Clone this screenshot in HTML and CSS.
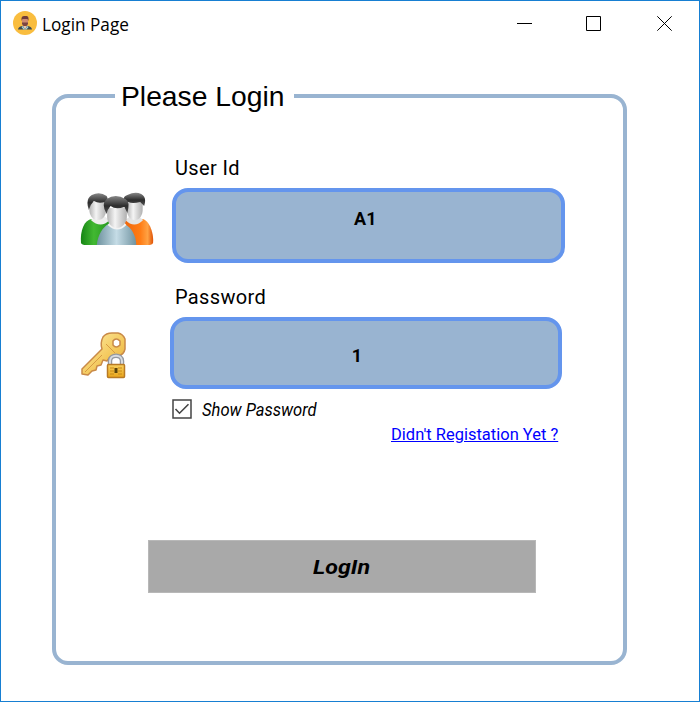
FILE: index.html
```
<!DOCTYPE html>
<html lang="en">
<head>
<meta charset="utf-8">
<title>Login Page</title>
<link rel="stylesheet" href="styles.css">
</head>
<body>
<main class="window">
  <header class="titlebar">
    <svg class="app-icon" width="24" height="24" viewBox="0 0 24 24">
      <circle cx="12" cy="12" r="12" fill="#f9bd3f"/>
      <path d="M5 18.500c.3-2.600 2-3 5-3.700h4c3 .7 4.700 1.100 5 3.700z" fill="#3d4a50"/>
      <path d="M10 13h4v2l-2 3.500-2-3.500z" fill="#e9c8ae"/>
      <path d="M9.500 15l2.500 3.500 2.500-3.500 1 1-2 2.500h-3l-2-2.500z" fill="#a8d5d8"/>
      <path d="M9 8h6v4c0 2-1.500 3-3 3s-3-1-3-3z" fill="#cf8b70"/>
      <path d="M8.500 10V7q.4-2 2.500-2h3q1.700.5 1.500 2.500V10l-1-2h-5z" fill="#703b3b"/>
      <path d="M9 11.500h6v1.500l-1.500 2h-3L9 13z" fill="#7b4540"/>
    </svg>
    <span class="title">Login Page</span>
    <div class="controls">
      <svg width="15" height="15" viewBox="0 0 15 15"><path d="M0 7.500h15" stroke="#000"/></svg>
      <svg width="15" height="15" viewBox="0 0 15 15"><path d="M.5.5h14v14H.5z" fill="none" stroke="#000"/></svg>
      <svg width="15" height="15" viewBox="0 0 15 15"><path d="M.3.300l14.400 14.400M14.700.3L.3 14.700" stroke="#000"/></svg>
    </div>
  </header>
  <section class="group">
    <h1 class="legend"><span>Please Login</span></h1>
    <div class="row user-row">
      <svg class="users" width="75" height="56" viewBox="0 0 76 56" preserveAspectRatio="none">
        <defs>
          <linearGradient id="green"><stop stop-color="#168514"/><stop offset=".35" stop-color="#42b832"/><stop offset="1" stop-color="#168817"/></linearGradient>
          <linearGradient id="orange"><stop stop-color="#e85a04"/><stop offset=".65" stop-color="#ff7d16"/><stop offset=".85" stop-color="#ffa244"/><stop offset="1" stop-color="#df5105"/></linearGradient>
          <linearGradient id="blue"><stop stop-color="#6e929f"/><stop offset=".5" stop-color="#c5dce6"/><stop offset="1" stop-color="#7194a1"/></linearGradient>
          <linearGradient id="face"><stop stop-color="#b4b4b4"/><stop offset=".4" stop-color="#f4f4f4"/><stop offset="1" stop-color="#b0b0b0"/></linearGradient>
          <linearGradient id="hair" x2="0" y2="1"><stop stop-color="#888"/><stop offset=".55" stop-color="#2c2c2c"/><stop offset="1" stop-color="#555"/></linearGradient>
        </defs>
        <path d="M1 51C0 39 4 28 12 27h18c7 3 9 16 8 26H6q-4 0-5-2z" fill="url(#green)"/>
        <path d="M37 53c0-12 2-24 11-26h15c8 1 12 16 11 24q-1 2-5 2z" fill="url(#orange)"/>
        <path d="M11 28l5-4h8l6 4q-9 9-19 0z" fill="#eee"/>
        <path d="M46 28l5-4h8l5 4q-9 9-18 0z" fill="#e4e4e4"/>
        <path d="M9.500 10h17v8c0 5-3 10-8.500 10s-8.500-5-8.500-10z" fill="url(#face)"/>
        <path d="M47.500 10h16v8c0 5-3 10-8 10s-8-5-8-10z" fill="url(#face)"/>
        <path d="M9 18Q5 7 12 3q8-4 15 1 3 5-1 12l-1-6q-6 2-11-1-4 4-5 9z" fill="url(#hair)"/>
        <path d="M46 10q-4-5 2-7 8-4 14-1 6 3 3 12l-4-4q-8 2-12 0z" fill="url(#hair)"/>
        <path d="M17 53c1-10 6-18 12-21h16c7 3 12 12 12 21z" fill="url(#blue)"/>
        <path d="M28 33l4-5h11l4 5q-9 9-19 0z" fill="#f3f3f3"/>
        <path d="M27.500 16h20v9c0 6-5 11-10 11s-10-5-10-11z" fill="url(#face)"/>
        <path d="M27 22q-6-10 0-15 9-6 19 0 5 2 2 14l-3-6q-9 3-14-1-3 3-4 8z" fill="url(#hair)"/>
      </svg>
      <div class="field">
        <label for="user">User Id</label>
        <div class="input user-input" id="user"><b>A1</b></div>
      </div>
    </div>
    <div class="row pass-row">
      <svg class="key" width="50" height="52" viewBox="0 0 50 52">
        <defs>
          <linearGradient id="gold" x2="1" y2="1"><stop stop-color="#fff0ac"/><stop offset=".6" stop-color="#f3c759"/><stop offset="1" stop-color="#e2a136"/></linearGradient>
          <linearGradient id="lock" x2="0" y2="1"><stop stop-color="#f8d160"/><stop offset="1" stop-color="#e9a51b"/></linearGradient>
        </defs>
        <path fill-rule="evenodd" d="M23 6q3-4 9-4h6q5 1 7 6v10q-1 5-6 7l-9 1-3 4-4-1-2 5-4 1-1 4-4 1-4 4-6-1v-5l20-20q-2-6 1-12zM33 10v4q3 4 7 0v-4q-4-4-7 0z" fill="url(#gold)" stroke="#c98a48" stroke-width="1.500" stroke-linejoin="round"/>
        <path d="M26 13l9 9M5 41l17-17" stroke="#d79b43" fill="none"/>
        <path d="M30 34v-4c0-7 12-7 12 0v4" fill="none" stroke="#9499a0" stroke-width="4.500"/>
        <path d="M30 34v-4c0-7 12-7 12 0v4" fill="none" stroke="#d7dbe0" stroke-width="2"/>
        <rect x="27.500" y="33.500" width="17" height="13" rx="1" fill="url(#lock)" stroke="#b87a24" stroke-width="1.500"/>
        <path d="M30 37h4m4 0h4m-12 3h4m4 0h4m-12 3h4m4 0h4" stroke="#c98a18"/>
        <path d="M34.500 37h3v5h-3z" fill="#5a420b"/>
      </svg>
      <div class="field">
        <label for="password">Password</label>
        <div class="input pass-input" id="password"><b>1</b></div>
      </div>
    </div>
    <div class="show">
      <svg width="20" height="20" viewBox="0 0 20 20"><path d="M1 1h18v18H1z" fill="#fff" stroke="#444" stroke-width="1.500"/><path d="M3.500 10l4 4.200 9-9" fill="none" stroke="#444" stroke-width="1.600"/></svg>
      <span>Show Password</span>
    </div>
    <a class="register" href="#">Didn't Registation Yet ?</a>
    <button class="login"><span>LogIn</span></button>
  </section>
</main>
</body>
</html>
```
FILE: styles.css
```
* { box-sizing: border-box; }
body { margin: 0; background: #fff; color: #000; font-family: Roboto, "Liberation Sans", sans-serif; }
.window { width: 700px; height: 702px; border: 1px solid #177fd2; background: #fff; overflow: hidden; }
.titlebar { display: flex; height: 48px; padding: 10px 27px 0 12px; }
.app-icon { flex: none; }
.title { margin-left: 5px; font: 18px/27px "Open Sans", sans-serif; white-space: nowrap; transform: scaleX(.955); transform-origin: left; }
.controls { display: flex; width: 155px; margin: 5px 0 0 auto; }
.controls svg:nth-child(2) { margin: 0 56px 0 54px; }
.group { position: relative; width: 575px; height: 571px; margin: 45px 0 0 51px; border: 4px solid #99b4d1; border-radius: 16px; padding-top: 58px; }
.legend { position: absolute; left: 59px; top: -19px; width: 179px; height: 36px; margin: 0; padding-left: 6px; background: #fff; font: 28px/36px "Liberation Sans", sans-serif; white-space: nowrap; }
.legend span { display: inline-block; transform: scaleX(1.01); transform-origin: left; }
.row { display: flex; }
.user-row { height: 129px; padding-left: 24px; }
.pass-row { height: 112px; padding-left: 24px; }
.users { margin-top: 36px; }
.key { margin: 46px 25px 0 0; }
.field { padding-left: 17px; }
label { display: block; height: 32px; padding-left: 3px; font-size: 20px; line-height: 24px; letter-spacing: .35px; }
.input { width: 393px; height: 75px; border: 4px solid #6495ed; border-radius: 16px; background: #99b4d1; text-align: center; font-size: 18px; line-height: 24px; }
.user-input { padding: 15px 6px 0 0; }
.user-input b { letter-spacing: .4px; }
.pass-input { width: 392px; height: 72px; margin-left: -2px; padding: 23px 18px 0 0; }
.show { display: flex; height: 22px; margin: 2px 0 0 116px; }
.show span { margin-left: 10px; font: italic 18px/22px Roboto, sans-serif; white-space: nowrap; transform: scaleX(.92); transform-origin: left; }
.register { display: block; width: 174px; margin: 2px 0 0 335px; color: #00f; font-size: 17px; line-height: 22px; white-space: nowrap; text-decoration: underline; transform: scaleX(.97); transform-origin: left; }
.login { display: block; width: 388px; height: 53px; margin: 95px 0 0 92px; border: 1px solid #b8b8b8; padding: 0; background: #a9a9a9; font: italic bold 20px/50px Roboto, sans-serif; color: #000; }
.login span { display: inline-block; transform: scaleX(1.16); }
```
